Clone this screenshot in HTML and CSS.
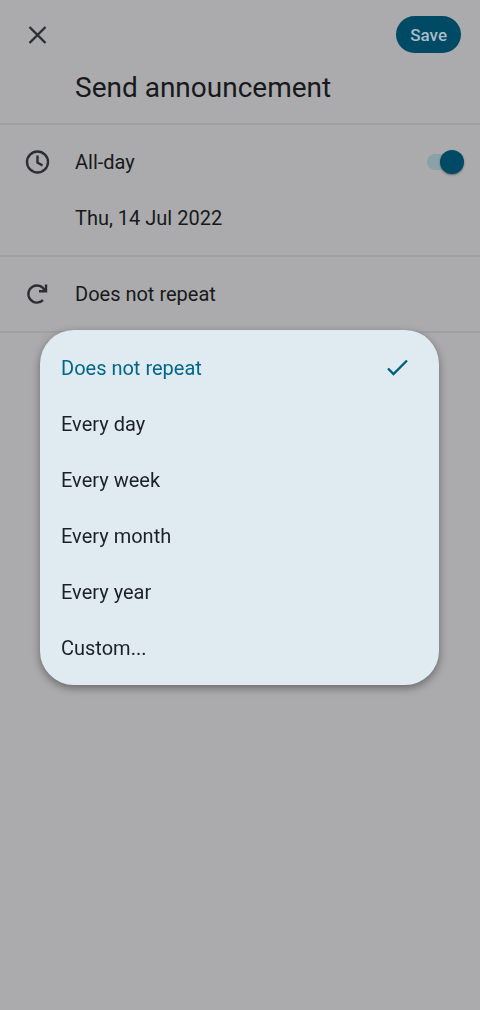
FILE: index.html
```html
<!DOCTYPE html>
<html lang="en">
<head>
    <meta charset="UTF-8">
    <meta name="viewport" content="width=device-width, initial-scale=1">
    <title>Send announcement</title>
    <link rel="stylesheet" href="styles.css">
</head>
<body>
    <form class="editor">
        <header class="toolbar">
            <button type="button" class="icon-button" aria-label="Close">
                <svg width="24" height="24" viewBox="0 0 24 24"><path d="M4.500 4 20.500 20M20.500 4 4.500 20"/></svg>
            </button>
            <button type="submit" class="save">Save</button>
        </header>

        <section class="title-row">
            <input type="text" class="title" aria-label="Title" value="Send announcement">
        </section>

        <section class="group">
            <div class="row">
                <svg class="row-icon" width="24" height="24" viewBox="0 0 24 24"><circle cx="12.500" cy="12" r="10.500"/><path d="M12.500 5.500v7l5 3"/></svg>
                <label class="row-text" for="all-day">All-day</label>
                <input type="checkbox" id="all-day" class="switch" role="switch" checked>
            </div>
            <div class="row">
                <button type="button" class="row-text">Thu, 14 Jul 2022</button>
            </div>
        </section>

        <section class="group">
            <div class="row">
                <svg class="row-icon" width="24" height="24" viewBox="0 0 24 24"><path d="M18 18.200A8.600 8.600 0 1 1 19.800 8.500"/><path d="M21 2.500V9.300H14"/></svg>
                <button type="button" class="row-text">Does not repeat</button>
            </div>
        </section>
    </form>

    <div class="overlay">
        <div class="dialog" role="dialog" aria-label="Repeat">
            <label class="option">
                <input type="radio" name="repeat" checked>
                <span>Does not repeat</span>
                <svg class="check" width="24" height="24" viewBox="0 0 24 24"><path d="M3 12.500 8.500 18 22 4.500"/></svg>
            </label>
            <label class="option">
                <input type="radio" name="repeat">
                <span>Every day</span>
            </label>
            <label class="option">
                <input type="radio" name="repeat">
                <span>Every week</span>
            </label>
            <label class="option">
                <input type="radio" name="repeat">
                <span>Every month</span>
            </label>
            <label class="option">
                <input type="radio" name="repeat">
                <span>Every year</span>
            </label>
            <label class="option">
                <input type="radio" name="repeat">
                <span>Custom...</span>
            </label>
        </div>
    </div>
</body>
</html>
```
FILE: styles.css
```css
* {
    box-sizing: border-box;
}
body {
    margin: 0;
    min-height: 100vh;
    background-color: #ababad;
    color: #17191c;
    font-family: Roboto, "Liberation Sans", sans-serif;
    font-size: 20px;
    line-height: 24px;
}
button, input {
    margin: 0;
    padding: 0;
    border: 0;
    background: none;
    color: inherit;
    font: inherit;
}
svg {
    display: block;
    flex: none;
    overflow: visible;
    fill: none;
    stroke: #2c2e32;
    stroke-width: 2.4;
}
.toolbar {
    display: flex;
    justify-content: space-between;
    align-items: center;
    padding: 16px 19px 0 25px;
}
.save {
    height: 37px;
    padding: 0 14px;
    border-radius: 19px;
    background-color: #004a66;
    color: #a9bdc6;
    font-size: 17px;
    font-weight: 500;
}
.title-row {
    padding: 16px 20px 18px 75px;
    border-bottom: 2px solid #a0a0a2;
}
.title {
    display: block;
    width: 100%;
    height: 36px;
    font-size: 28px;
}
.group {
    padding: 9px 0;
    border-bottom: 2px solid #a0a0a2;
}
.row {
    display: flex;
    align-items: center;
    height: 56px;
    padding: 0 16px 0 75px;
}
.row-icon {
    margin-left: -50px;
    margin-right: 26px;
}
.row-text {
    flex: 1;
    text-align: left;
}
.switch {
    appearance: none;
    display: flex;
    align-items: center;
    width: 37px;
    height: 24px;
}
/* track */
.switch::before {
    content: "";
    width: 32px;
    height: 16px;
    flex: none;
    border-radius: 8px;
    background-color: #8ba1a8;
}
/* thumb */
.switch::after {
    content: "";
    width: 24px;
    height: 24px;
    flex: none;
    margin-left: -19px;
    border-radius: 50%;
    background-color: #004a66;
    box-shadow: 0 1px 2px rgba(0, 0, 0, 0.4);
}
.overlay {
    position: fixed;
    inset: 0;
    display: flex;
    align-items: center;
    padding: 5px 41px 0 40px;
}
.dialog {
    flex: 1;
    padding: 10px 0 9px;
    border-radius: 34px;
    background-color: #e0ebf1;
    box-shadow: 0 3px 8px rgba(0, 0, 0, 0.4);
}
.option {
    display: flex;
    align-items: center;
    justify-content: space-between;
    height: 56px;
    padding: 0 30px 0 21px;
    color: #1b2126;
}
.option input {
    appearance: none;
    position: absolute;
}
.option:has(input:checked) {
    color: #00668b;
}
.check {
    stroke: #006080;
}
```
